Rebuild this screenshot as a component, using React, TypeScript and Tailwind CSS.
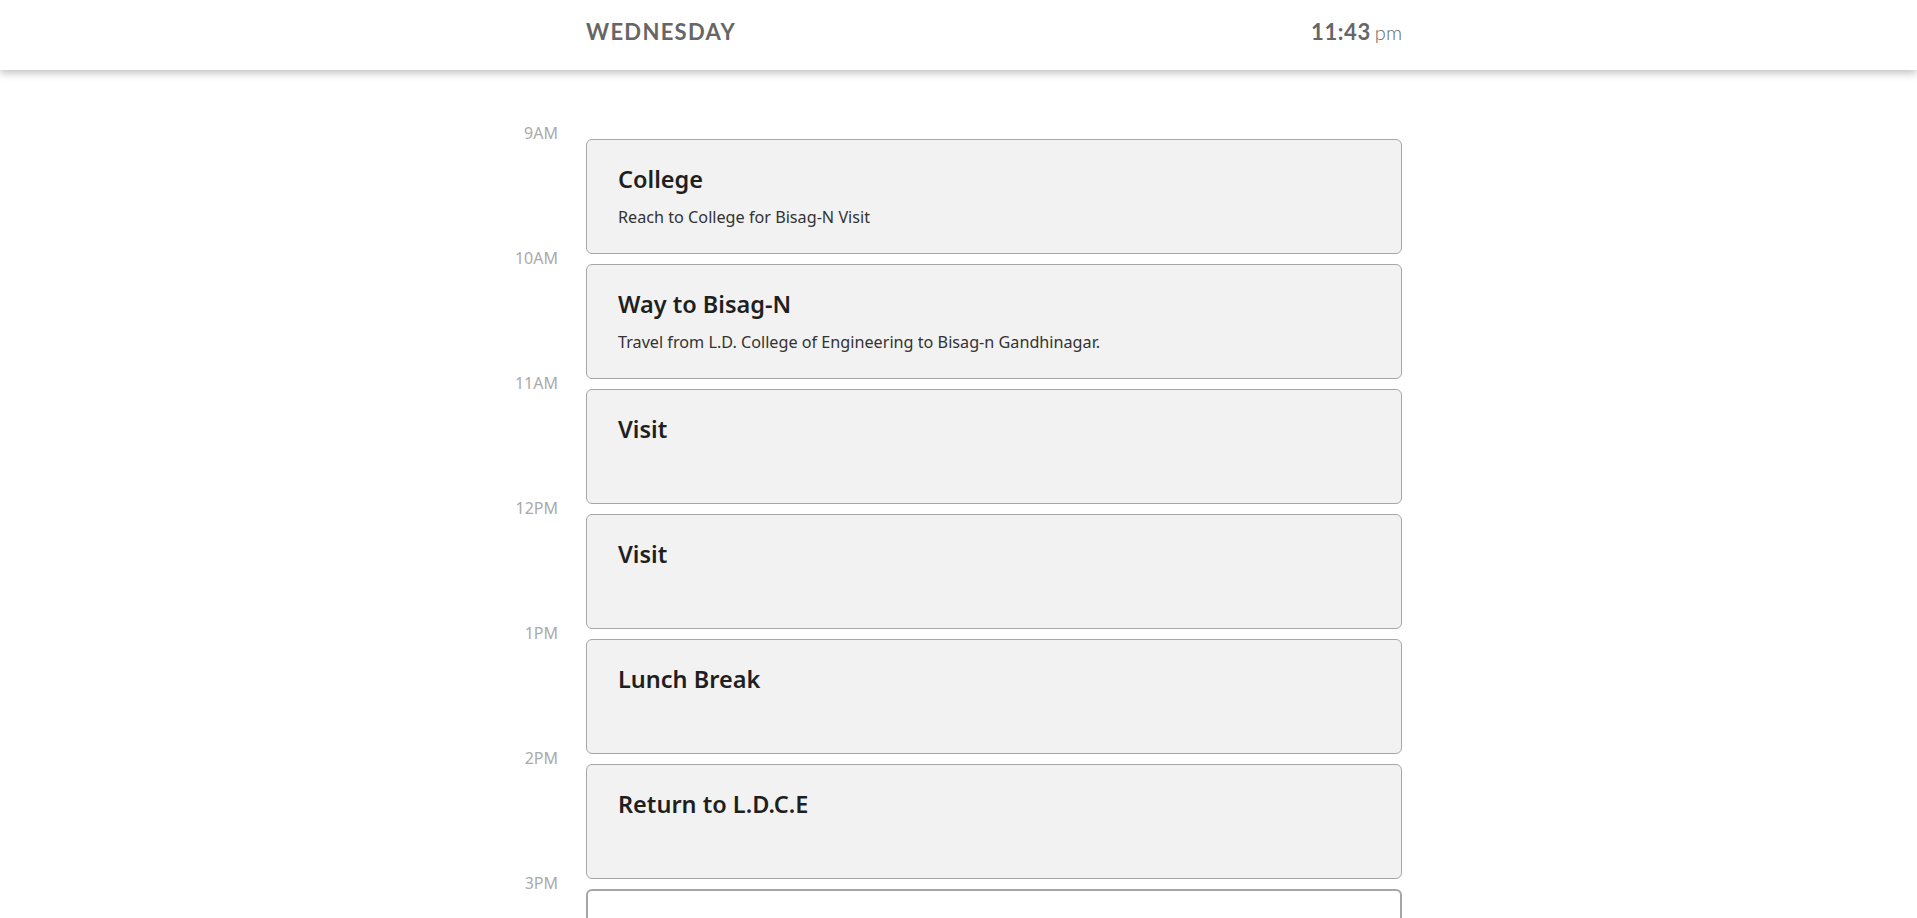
import React from "react";

type Slot = {
  hour: string;
  title?: string;
  desc?: string;
};

const slots: Slot[] = [
  { hour: "9AM", title: "College", desc: "Reach to College for Bisag-N Visit" },
  { hour: "10AM", title: "Way to Bisag-N", desc: "Travel from L.D. College of Engineering to Bisag-n Gandhinagar." },
  { hour: "11AM", title: "Visit" },
  { hour: "12PM", title: "Visit" },
  { hour: "1PM", title: "Lunch Break" },
  { hour: "2PM", title: "Return to L.D.C.E" },
  { hour: "3PM" },
];

export default function App() {
  return (
    <div className="min-h-screen bg-white pr-[15px] font-['Noto_Sans',sans-serif]">
      {/* Top bar */}
      <header className="h-[70px] bg-white shadow-[0_3px_8px_rgba(0,0,0,0.25)] relative z-10 -mr-[15px] pr-[15px]">
        <div className="mx-auto w-[902px] pl-[86px] h-full flex items-start justify-between pt-[15px]">
          <h1 className="text-[22px] font-bold tracking-[1.3px] text-[#666] font-['Lato',sans-serif]">
            WEDNESDAY
          </h1>
          <div className="text-[#666] font-['Lato',sans-serif]">
            <span className="text-[22px] font-bold tracking-[0.6px]">11:43</span>{" "}
            <span className="text-[20px] font-light">pm</span>
          </div>
        </div>
      </header>

      {/* Schedule */}
      <main className="mx-auto w-[902px] pt-[69px] pb-[40px]">
        {slots.map((slot) => (
          <HourRow key={slot.hour} {...slot} />
        ))}
      </main>
    </div>
  );
}

function HourRow({ hour, title, desc }: Slot) {
  const empty = !title;
  return (
    <div className="flex gap-[28px] mb-[10px]">
      <div className="w-[58px] shrink-0 text-right text-[16px] leading-5 text-[#aaa] -mt-[16px]">
        {hour}
      </div>
      <div
        className={
          empty
            ? "w-[816px] h-[115px] rounded-[6px] border-2 border-[#a6a6a6] bg-white"
            : "w-[816px] h-[115px] rounded-[6px] border border-[#a6a6a6] bg-[#f2f2f2] px-[31px] pt-[24px]"
        }
      >
        {title && (
          <h2 className="text-[23.5px] leading-[30px] font-semibold text-[#1f1f1f]">{title}</h2>
        )}
        {desc && <p className="mt-[11px] text-[16.2px] leading-6 text-[#333]">{desc}</p>}
      </div>
    </div>
  );
}
